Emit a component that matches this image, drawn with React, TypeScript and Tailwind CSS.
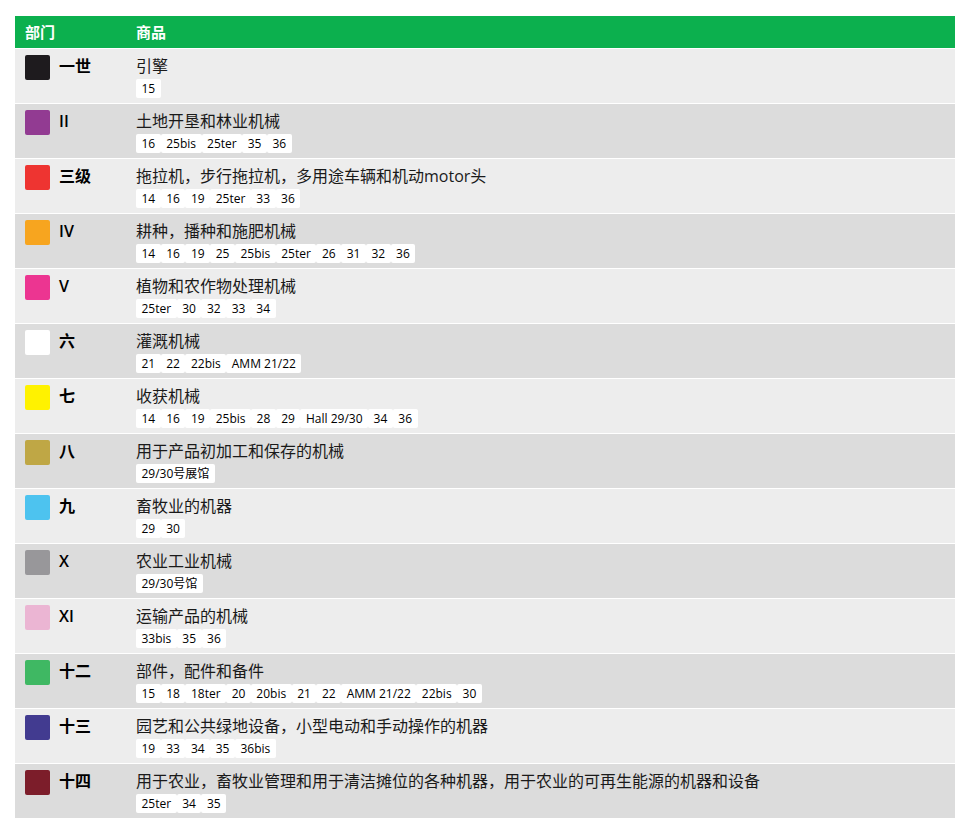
const rows = [
  { color: "bg-[#1e1b1e]", dept: "一世", title: "引擎", tags: ["15"] },
  { color: "bg-[#923b92]", dept: "II", title: "土地开垦和林业机械", tags: ["16", "25bis", "25ter", "35", "36"] },
  { color: "bg-[#ee3431]", dept: "三级", title: "拖拉机，步行拖拉机，多用途车辆和机动motor头", tags: ["14", "16", "19", "25ter", "33", "36"] },
  { color: "bg-[#f7a51f]", dept: "IV", title: "耕种，播种和施肥机械", tags: ["14", "16", "19", "25", "25bis", "25ter", "26", "31", "32", "36"] },
  { color: "bg-[#ec3591]", dept: "V", title: "植物和农作物处理机械", tags: ["25ter", "30", "32", "33", "34"] },
  { color: "bg-[#ffffff]", dept: "六", title: "灌溉机械", tags: ["21", "22", "22bis", "AMM 21/22"] },
  { color: "bg-[#fff200]", dept: "七", title: "收获机械", tags: ["14", "16", "19", "25bis", "28", "29", "Hall 29/30", "34", "36"] },
  { color: "bg-[#bfa745]", dept: "八", title: "用于产品初加工和保存的机械", tags: ["29/30号展馆"] },
  { color: "bg-[#4dc3ef]", dept: "九", title: "畜牧业的机器", tags: ["29", "30"] },
  { color: "bg-[#98979a]", dept: "X", title: "农业工业机械", tags: ["29/30号馆"] },
  { color: "bg-[#ebb5d3]", dept: "XI", title: "运输产品的机械", tags: ["33bis", "35", "36"] },
  { color: "bg-[#3fb863]", dept: "十二", title: "部件，配件和备件", tags: ["15", "18", "18ter", "20", "20bis", "21", "22", "AMM 21/22", "22bis", "30"] },
  { color: "bg-[#423b90]", dept: "十三", title: "园艺和公共绿地设备，小型电动和手动操作的机器", tags: ["19", "33", "34", "35", "36bis"] },
  { color: "bg-[#7c1d2a]", dept: "十四", title: "用于农业，畜牧业管理和用于清洁摊位的各种机器，用于农业的可再生能源的机器和设备", tags: ["25ter", "34", "35"] },
]

export default function App() {
  return (
    <div className="min-h-screen bg-white pt-4 pl-[15px] font-['Open_Sans','Noto_Sans_CJK_SC',sans-serif] text-[#1a1a1a]">
      <div className="w-[940px]">
        {/* header */}
        <div className="flex h-8 items-center bg-[#0cb04e] text-[15px] font-bold text-white">
          <div className="w-[111px] pl-[10px]">部门</div>
          <div className="pl-[10px]">商品</div>
        </div>

        {rows.map((r, i) => (
          <div
            key={r.dept}
            className={
              "mt-px flex h-[54px] " + (i % 2 === 0 ? "bg-[#ededed]" : "bg-[#dcdcdc]")
            }
          >
            <div className="flex w-[111px] items-start gap-[9px] pl-[10px] pt-[6px]">
              <div className={"h-[25px] w-[25px] shrink-0 rounded-[2px] " + r.color} />
              <div className="text-[16px] font-semibold leading-[22px] text-black">{r.dept}</div>
            </div>
            <div className="pl-[10px] pt-[6px]">
              <div className="text-[16px] leading-[22px]">{r.title}</div>
              <div className="mt-[2px] flex">
                {r.tags.map((t, j) => (
                  <span
                    key={j}
                    className="rounded-[2px] bg-white px-[5.5px] text-[12px] leading-[19px] text-black"
                  >
                    {t}
                  </span>
                ))}
              </div>
            </div>
          </div>
        ))}
      </div>
    </div>
  )
}
